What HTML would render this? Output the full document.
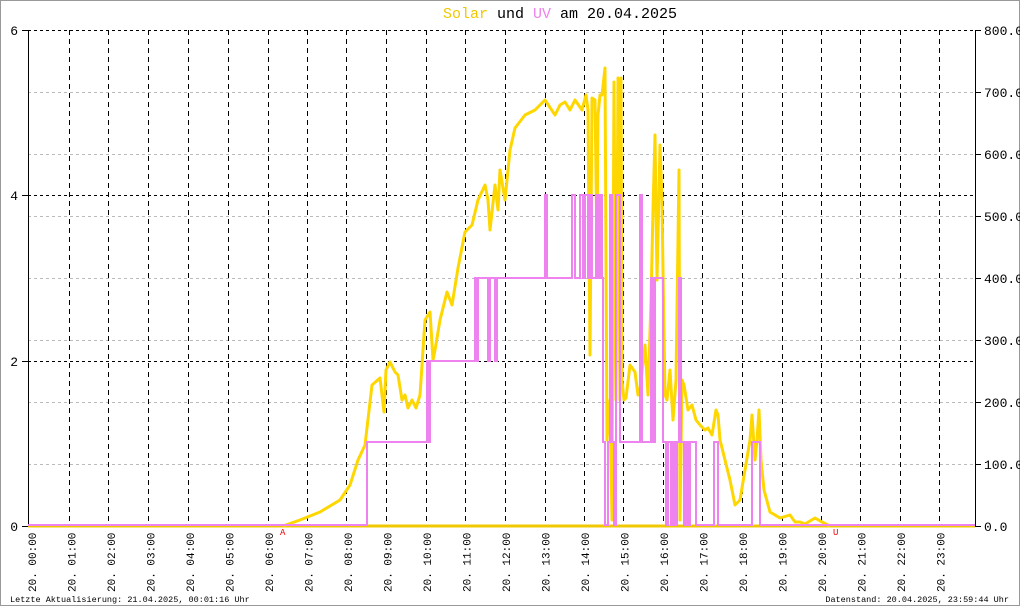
<!DOCTYPE html>
<html><head><meta charset="utf-8"><style>
body{margin:0;background:#fff}
svg{display:block;font-family:"Liberation Mono","DejaVu Sans Mono",monospace}
</style></head><body>
<svg width="1020" height="606" viewBox="0 0 1020 606" xmlns="http://www.w3.org/2000/svg">
<rect x="0.5" y="0.5" width="1019" height="605" fill="#fff" stroke="#999"/>
<text x="560" y="18" text-anchor="middle" font-size="15"><tspan fill="#f0c800">Solar</tspan> und <tspan fill="#ee82ee">UV</tspan> am 20.04.2025</text>
<g stroke="#bbb" stroke-dasharray="3,3" stroke-width="1">
<path d="M28,92.5H975M28,154.5H975M28,216.5H975M28,278.5H975M28,340.5H975M28,402.5H975M28,464.5H975"/>
</g>
<g stroke="#000" stroke-dasharray="3,3" stroke-width="1">
<path d="M28,30.5H975M28,195.5H975M28,361.5H975"/>
</g>
<g stroke="#000" stroke-dasharray="5,4" stroke-width="1">
<path d="M69.5,30V526M108.5,30V526M148.5,30V526M188.5,30V526M228.5,30V526M268.5,30V526M307.5,30V526M346.5,30V526M386.5,30V526M426.5,30V526M465.5,30V526M505.5,30V526M545.5,30V526M584.5,30V526M623.5,30V526M663.5,30V526M702.5,30V526M742.5,30V526M782.5,30V526M821.5,30V526M860.5,30V526M900.5,30V526M939.5,30V526"/>
</g>
<path d="M28.5,30V526.5M975.5,30V526.5M22,30.5H28M22,195.5H28M22,361.5H28M22,526.5H28M975,30.5H981M975,92.5H981M975,154.5H981M975,216.5H981M975,278.5H981M975,340.5H981M975,402.5H981M975,464.5H981M975,526.5H981" stroke="#000" fill="none"/>
<g font-size="13" text-anchor="end">
<text x="18" y="35">6</text><text x="18" y="200">4</text><text x="18" y="366">2</text><text x="18" y="531">0</text>
</g>
<g font-size="13">
<text x="984" y="35">800.0</text><text x="984" y="97">700.0</text><text x="984" y="159">600.0</text><text x="984" y="221">500.0</text><text x="984" y="283">400.0</text><text x="984" y="345">300.0</text><text x="984" y="407">200.0</text><text x="984" y="469">100.0</text><text x="984" y="531">0.0</text>
</g>
<line x1="28" y1="526" x2="975" y2="526" stroke="#f0c800" stroke-width="3"/>
<polyline fill="none" stroke="#ffd700" stroke-width="3" stroke-linejoin="round" points="283,526 300,520 320,512 340,500 350,485 358,460 365,445 372,385 380,378 384,412 386,370 390,362 395,372 398,375 402,400 405,395 408,408 412,400 416,408 420,395 425,320 430,312 433,360 435,350 440,320 447,292 452,305 458,268 465,232 472,225 478,200 485,185 488,200 490,230 495,185 498,210 500,170 505,200 510,150 515,128 525,115 535,110 545,100 555,115 560,105 565,102 570,110 575,100 582,110 586,95 588,110 590,355 592,98 595,100 597,250 598,115 600,95 602,95 605,68 607,440 610,400 612,520 614,82 616,400 618,78 620,400 621,78 622,380 624,400 626,398 630,365 635,372 638,395 640,390 645,345 648,395 651,300 653,210 655,135 657,280 660,145 662,200 663,270 665,395 667,400 670,370 673,420 676,380 679,170 680,520 682,380 684,385 688,410 692,405 696,420 700,425 705,430 708,428 712,435 716,410 718,415 720,440 725,460 730,480 735,505 740,500 745,470 750,440 752,415 755,460 757,440 759,410 761,460 764,490 770,512 780,518 790,515 795,522 800,522 805,524 815,518 822,522 830,526"/>
<path fill="none" stroke="#ee82ee" stroke-width="2" d="M28,525 H367 V442 H427 V361 H428 V442 H430 V361 H475 V278 H477 V361 H478 V278 H488 V361 H490 V278 H495 V361 H497 V278 H545 V195 H547 V278 H572 V195 H575 V278 H580 V195 H583 V278 H585 V195 H588 V278 H590 V195 H592 V278 H596 V195 H598 V278 H600 V195 H602 V278 H603 V442 H605 V525 H608 V442 H610 V195 H612 V442 H614 V525 H616 V195 H620 V442 H640 V195 H642 V442 H651 V278 H653 V442 H655 V278 H661 V278 H663 V442 H666 V525 H668 V442 H671 V525 H673 V442 H675 V525 H677 V442 H679 V278 H681 V442 H684 V525 H686 V442 H688 V525 H690 V442 H696 V525 H714 V442 H718 V525 H752 V442 H758 V442 H760 V525 H975"/>
<text x="280" y="535" font-size="9" fill="#e00">A</text>
<text x="833" y="535" font-size="9" fill="#e00">U</text>
<g font-size="11">
<text transform="translate(36,592) rotate(-90)">20. 00:00</text>
<text transform="translate(75.5,592) rotate(-90)">20. 01:00</text>
<text transform="translate(115,592) rotate(-90)">20. 02:00</text>
<text transform="translate(154.5,592) rotate(-90)">20. 03:00</text>
<text transform="translate(194,592) rotate(-90)">20. 04:00</text>
<text transform="translate(233.5,592) rotate(-90)">20. 05:00</text>
<text transform="translate(273,592) rotate(-90)">20. 06:00</text>
<text transform="translate(312.5,592) rotate(-90)">20. 07:00</text>
<text transform="translate(352,592) rotate(-90)">20. 08:00</text>
<text transform="translate(391.5,592) rotate(-90)">20. 09:00</text>
<text transform="translate(431,592) rotate(-90)">20. 10:00</text>
<text transform="translate(470.5,592) rotate(-90)">20. 11:00</text>
<text transform="translate(510,592) rotate(-90)">20. 12:00</text>
<text transform="translate(549.5,592) rotate(-90)">20. 13:00</text>
<text transform="translate(589,592) rotate(-90)">20. 14:00</text>
<text transform="translate(628.5,592) rotate(-90)">20. 15:00</text>
<text transform="translate(668,592) rotate(-90)">20. 16:00</text>
<text transform="translate(707.5,592) rotate(-90)">20. 17:00</text>
<text transform="translate(747,592) rotate(-90)">20. 18:00</text>
<text transform="translate(786.5,592) rotate(-90)">20. 19:00</text>
<text transform="translate(826,592) rotate(-90)">20. 20:00</text>
<text transform="translate(865.5,592) rotate(-90)">20. 21:00</text>
<text transform="translate(905,592) rotate(-90)">20. 22:00</text>
<text transform="translate(944.5,592) rotate(-90)">20. 23:00</text>
</g>
<text x="10" y="602" font-size="8.5">Letzte Aktualisierung: 21.04.2025, 00:01:16 Uhr</text>
<text x="1009" y="602" font-size="8.5" text-anchor="end">Datenstand: 20.04.2025, 23:59:44 Uhr</text>
</svg>
</body></html>
